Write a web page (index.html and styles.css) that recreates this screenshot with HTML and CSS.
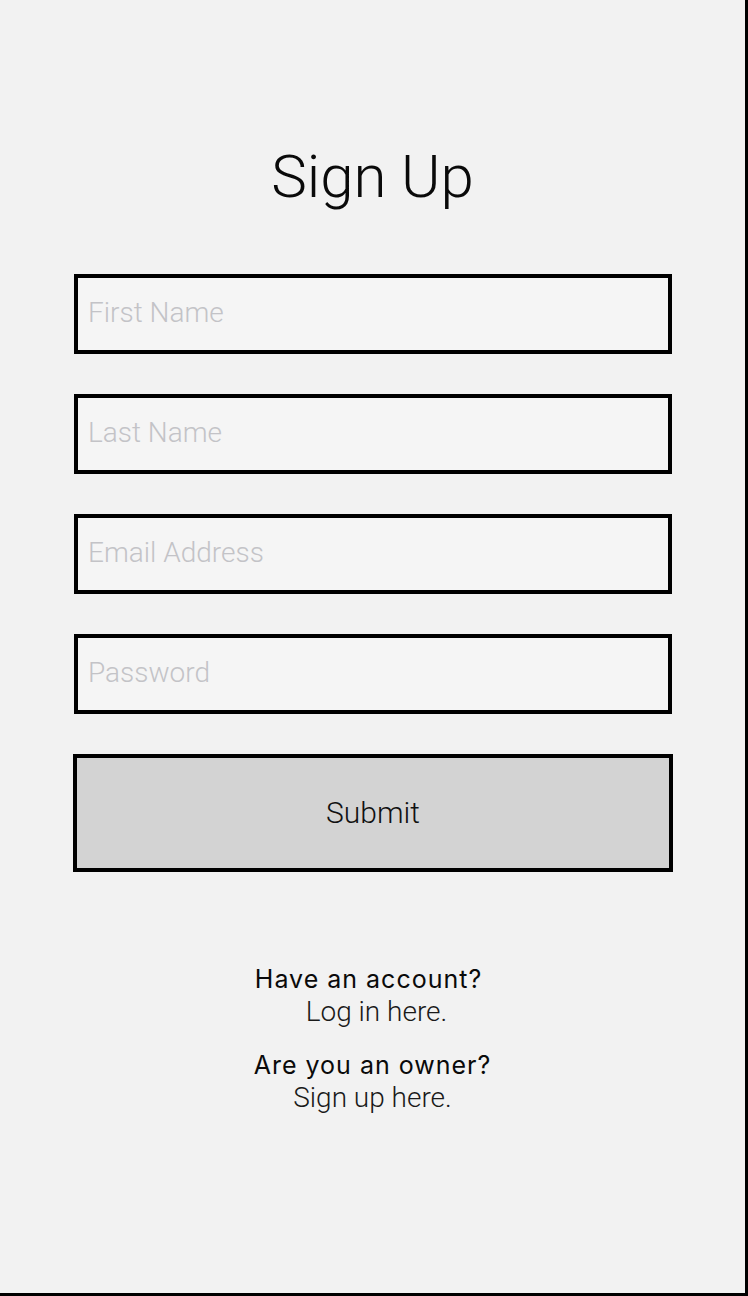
FILE: index.html
```html
<!DOCTYPE html>
<html lang="en">
<head>
<meta charset="utf-8">
<title>Sign Up</title>
<link rel="stylesheet" href="styles.css">
</head>
<body>
<div class="page">
  <h1 class="title">Sign Up</h1>
  <form class="form">
    <input class="field" type="text" placeholder="First Name">
    <input class="field" type="text" placeholder="Last Name">
    <input class="field" type="email" placeholder="Email Address">
    <input class="field" type="password" placeholder="Password">
    <button class="submit" type="button">Submit</button>
  </form>
  <div class="links">
    <div class="group">
      <p class="question question-login">Have an account?</p>
      <p class="answer answer-login">Log in here.</p>
    </div>
    <div class="group">
      <p class="question">Are you an owner?</p>
      <p class="answer">Sign up here.</p>
    </div>
  </div>
</div>
</body>
</html>
```
FILE: styles.css
```css
* { box-sizing: border-box; }
html, body { margin: 0; padding: 0; background: #f2f2f2; }
.page {
  width: 748px;
  height: 1296px;
  border-right: 3px solid #000;
  border-bottom: 3px solid #000;
  background: #f2f2f2;
  padding-top: 142px;
  font-family: Roboto, "Noto Sans", sans-serif;
}
.title {
  margin: 0;
  text-align: center;
  font-size: 60px;
  font-weight: 300;
  line-height: 70px;
  color: #0a0a0a;
}
.form {
  margin-top: 62px;
  display: flex;
  flex-direction: column;
  align-items: flex-start;
  gap: 40px;
  padding-left: 74px;
}
.field {
  display: block;
  width: 598px;
  height: 80px;
  margin: 0;
  border: 4px solid #000;
  border-radius: 0;
  background: #f5f5f5;
  padding: 0 0 4px 10px;
  font-family: Roboto, sans-serif;
  font-weight: 300;
  font-size: 28px;
  color: #111;
  outline: none;
}
.field::placeholder { color: #c3c3c7; opacity: 1; }
.submit {
  display: block;
  width: 600px;
  height: 118px;
  margin: 0 0 0 -1px;
  border: 4px solid #000;
  border-radius: 0;
  background: #d3d3d3;
  font-family: Roboto, sans-serif;
  font-weight: 300;
  font-size: 30px;
  color: #111;
  padding: 0 0 2px 0;
}
.links {
  margin-top: 90px;
  display: flex;
  flex-direction: column;
  gap: 18px;
  text-align: center;
}
.group p { margin: 0; line-height: 34px; }
.question {
  font-family: Inter, "Liberation Sans", Arial, sans-serif;
  font-size: 25px;
  letter-spacing: 1px;
  color: #0a0a0a;
}
.question-login { padding-right: 8px; }
.answer {
  font-family: Roboto, sans-serif;
  font-weight: 300;
  font-size: 28px;
  color: #1a1a1a;
  position: relative;
  top: -1px;
}
.answer-login { padding-left: 8px; }
```
